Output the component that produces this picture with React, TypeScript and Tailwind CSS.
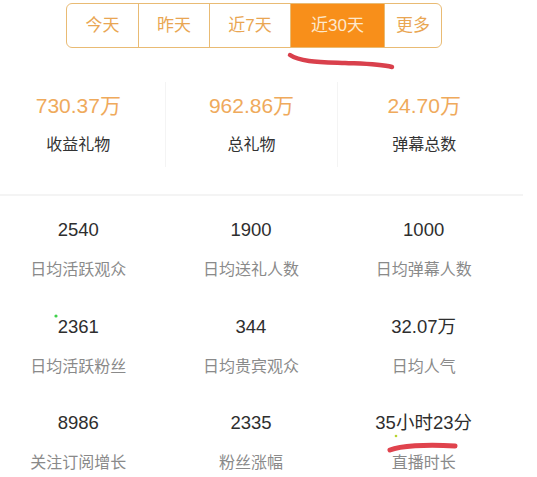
import React from "react";

const font = { fontFamily: '"Liberation Sans", "Noto Sans CJK SC", sans-serif' };

const tabs = [
  { label: "今天", w: "w-[71px]", active: false },
  { label: "昨天", w: "w-[71px]", active: false },
  { label: "近7天", w: "w-[81px]", active: false },
  { label: "近30天", w: "w-[94px]", active: true },
  { label: "更多", w: "w-[57px]", active: false },
];

const top = [
  { v: "730.37万", l: "收益礼物" },
  { v: "962.86万", l: "总礼物" },
  { v: "24.70万", l: "弹幕总数" },
];

const rows = [
  [
    { v: "2540", l: "日均活跃观众" },
    { v: "1900", l: "日均送礼人数" },
    { v: "1000", l: "日均弹幕人数" },
  ],
  [
    { v: "2361", l: "日均活跃粉丝" },
    { v: "344", l: "日均贵宾观众" },
    { v: "32.07万", l: "日均人气" },
  ],
  [
    { v: "8986", l: "关注订阅增长" },
    { v: "2335", l: "粉丝涨幅" },
    { v: "35小时23分", l: "直播时长" },
  ],
];

export default function App() {
  return (
    <div className="relative w-[537px] h-[477px] bg-white overflow-hidden" style={font}>
      {/* Tabs */}
      <div className="pt-[3px] pl-[66px]">
        <div className="flex h-[45px] w-fit rounded-[6px] border-[1.5px] border-[#e9bb74] overflow-hidden">
          {tabs.map((t, i) => (
            <div
              key={t.label}
              className={`${t.w} flex items-center justify-center text-[17px] ${
                i > 0 ? "border-l-[1.5px] border-[#e9bb74]" : ""
              } ${t.active ? "bg-[#f88f1a] text-[#fde8cc]" : "text-[#e9a653]"}`}
            >
              {t.label}
            </div>
          ))}
        </div>
      </div>

      {/* Top stats */}
      <div className="mt-[34px] -ml-2 w-[518px] grid grid-cols-3">
        {top.map((s, i) => (
          <div
            key={s.l}
            className={`h-[85px] flex flex-col items-center ${i > 0 ? "border-l-[1.5px] border-[#f4f4f4]" : ""}`}
          >
            <div className="pt-[12px] text-[21px] leading-[24px] text-[#efaa5c]">{s.v}</div>
            <div className="mt-[17px] text-[16px] leading-[20px] text-[#333333]">{s.l}</div>
          </div>
        ))}
      </div>

      <div className="mt-[27px] h-[2px] w-[523px] bg-[#f4f4f4]" />

      {/* Grid */}
      <div className="mt-[23px] -ml-2 w-[518px]">
        {rows.map((r, ri) => (
          <div key={ri} className="grid grid-cols-3 h-[96.5px]">
            {r.map((s) => (
              <div key={s.l} className="flex flex-col items-center">
                <div className="text-[18.5px] leading-[22px] text-[#2e2e2e]">{s.v}</div>
                <div className="mt-[19px] text-[16px] leading-[20px] text-[#8a8a8a]">{s.l}</div>
              </div>
            ))}
          </div>
        ))}
      </div>

      {/* Annotation strokes */}
      <svg className="absolute left-0 top-0 pointer-events-none" width="537" height="477">
        <path
          d="M 290 55 C 300 62, 320 62, 345 63 S 380 64, 392 67"
          stroke="#d9404c"
          strokeWidth="4.5"
          fill="none"
          strokeLinecap="round"
        />
        <path
          d="M 390 450 C 400 446, 425 444, 455 446"
          stroke="#e0434d"
          strokeWidth="5"
          fill="none"
          strokeLinecap="round"
        />
        <circle cx="56" cy="316" r="1.6" fill="#3fd14a" />
        <circle cx="396" cy="436" r="1.3" fill="#b8d430" />
      </svg>
    </div>
  );
}
